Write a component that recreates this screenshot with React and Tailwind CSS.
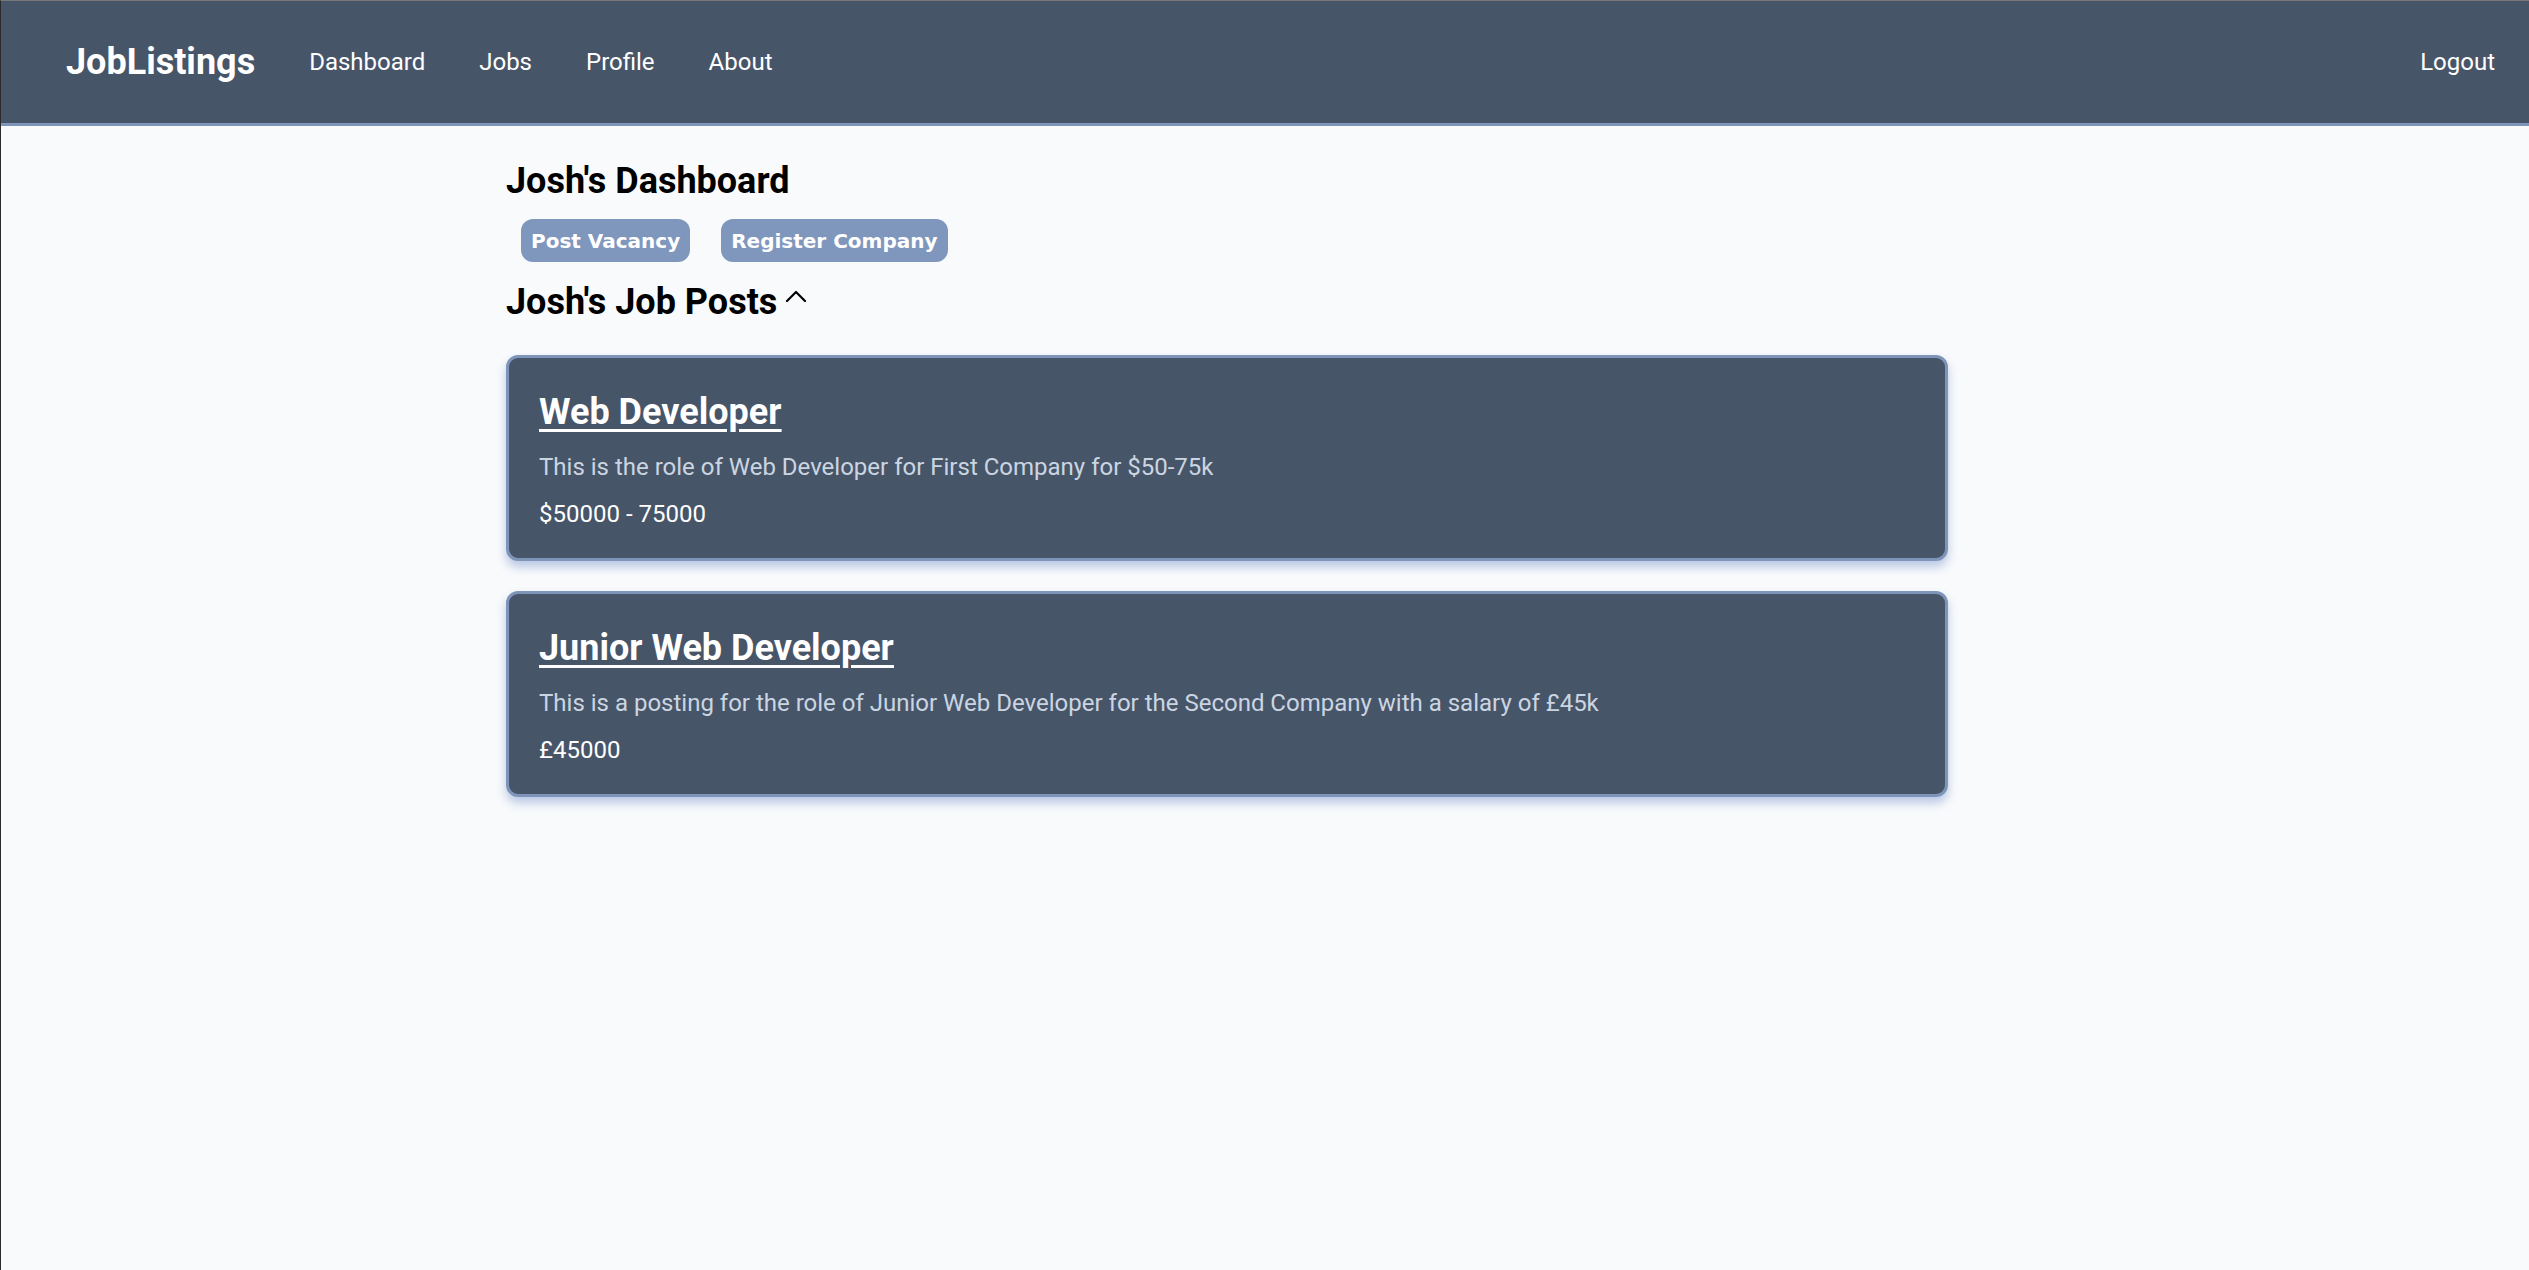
import React from 'react';

const jobs = [
  {
    title: 'Web Developer',
    description: 'This is the role of Web Developer for First Company for $50-75k',
    salary: '$50000 - 75000',
  },
  {
    title: 'Junior Web Developer',
    description:
      'This is a posting for the role of Junior Web Developer for the Second Company with a salary of £45k',
    salary: '£45000',
  },
];

function Navbar() {
  return (
    <nav className="h-[125px] bg-[#475569] border-b-[3px] border-[#7e95b9] flex items-center justify-between pl-[65px] pr-[34px]">
      <div className="flex items-center gap-[54px]">
        <a href="#" className="text-[36px] font-bold text-white leading-[44px]">
          JobListings
        </a>
        <a href="#" className="text-[24px] text-white leading-[32px]">Dashboard</a>
        <a href="#" className="text-[24px] text-white leading-[32px]">Jobs</a>
        <a href="#" className="text-[24px] text-white leading-[32px]">Profile</a>
        <a href="#" className="text-[24px] text-white leading-[32px]">About</a>
      </div>
      <a href="#" className="text-[24px] text-white leading-[32px]">Logout</a>
    </nav>
  );
}

function JobCard({ job }) {
  return (
    <div className="bg-[#475569] border-[3px] border-[#7e95b9] rounded-[12px] shadow-[0_6px_10px_rgba(110,140,200,0.45)] pt-[32px] pb-[28px] px-[30px]">
      <h3 className="text-[36px] font-bold text-white underline underline-offset-[5px] decoration-[3px] leading-[44px]">
        <a href="#">{job.title}</a>
      </h3>
      <p className="mt-[17px] text-[24px] leading-[32px] text-[#cbd5e1]">{job.description}</p>
      <p className="mt-[15px] text-[24px] leading-[32px] text-white">{job.salary}</p>
    </div>
  );
}

export default function App() {
  return (
    <div
      className="min-h-screen bg-[#f8fafc] border-l border-t border-l-[#2b2b2b] border-t-[#777777]"
      style={{ fontFamily: 'Roboto, "Noto Sans", sans-serif' }}
    >
      <Navbar />

      <main className="ml-[505px] w-[1442px] pt-[33px]">
        <h1 className="text-[36px] font-bold text-black leading-[44px]">Josh's Dashboard</h1>

        <div className="mt-[16px] ml-[15px] flex gap-[31px]">
          <button
            className="h-[43px] px-[10px] rounded-[12px] bg-[#7f97bd] text-white text-[20px] font-bold"
            style={{ fontFamily: '"DejaVu Sans", sans-serif' }}
          >
            Post Vacancy
          </button>
          <button
            className="h-[43px] px-[10px] rounded-[12px] bg-[#7f97bd] text-white text-[20px] font-bold"
            style={{ fontFamily: '"DejaVu Sans", sans-serif' }}
          >
            Register Company
          </button>
        </div>

        <h2 className="mt-[18px] flex items-center text-[36px] font-bold text-black leading-[44px]">
          Josh's Job Posts
          <svg
            width="22"
            height="14"
            viewBox="0 0 22 14"
            className="ml-[8px] mb-[12px]"
            fill="none"
            stroke="black"
            strokeWidth="2.2"
            strokeLinecap="round"
            strokeLinejoin="round"
          >
            <polyline points="2,12 11,3 20,12" />
          </svg>
        </h2>

        <div className="mt-[31px] flex flex-col gap-[30px]">
          {jobs.map((job) => (
            <JobCard key={job.title} job={job} />
          ))}
        </div>
      </main>
    </div>
  );
}
